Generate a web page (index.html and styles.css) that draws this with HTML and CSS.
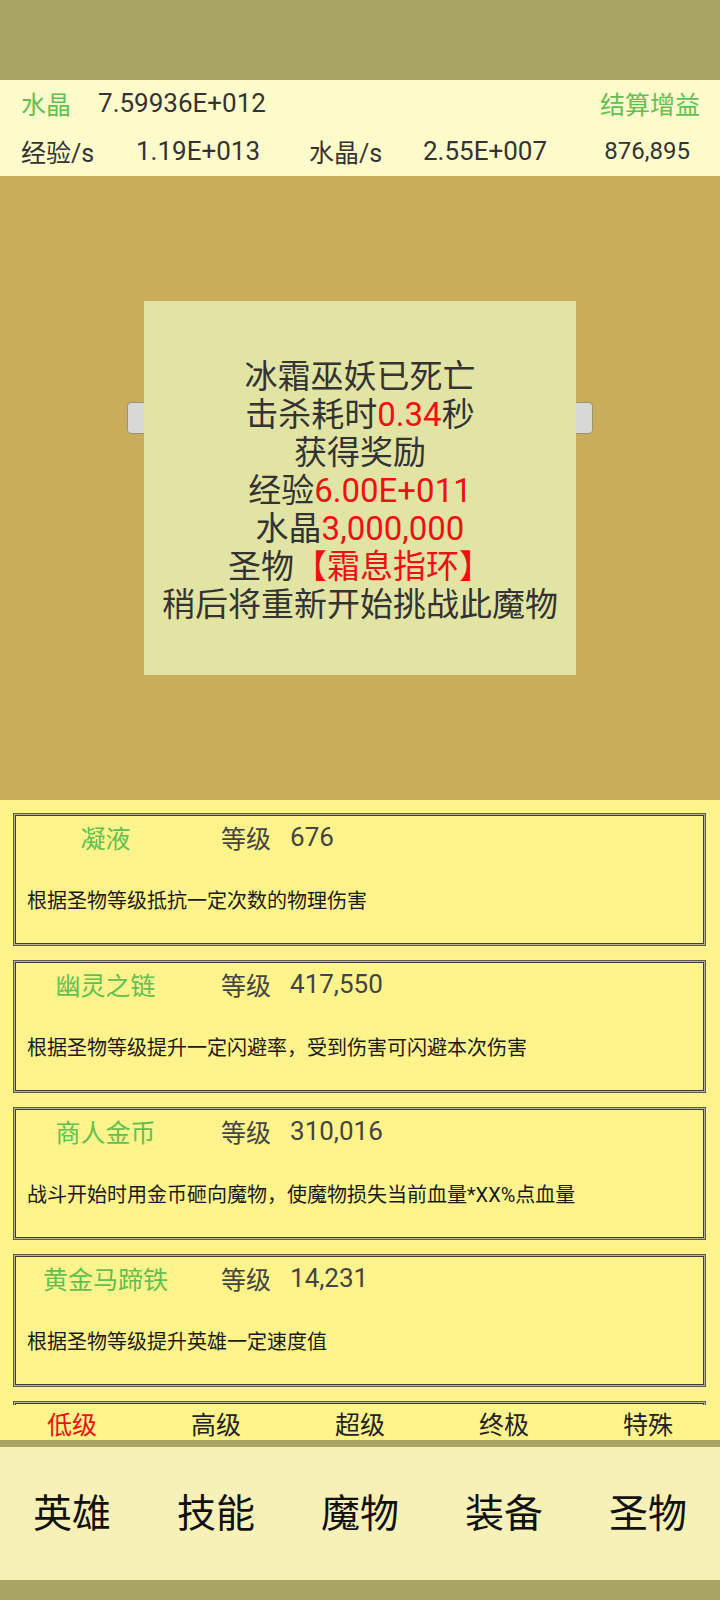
FILE: index.html
```html
<!DOCTYPE html>
<html lang="zh">
<head>
  <meta charset="UTF-8">
  <meta name="viewport" content="width=device-width, initial-scale=1.0">
  <title>圣物</title>
  <link rel="stylesheet" href="styles.css">
</head>
<body>
  <div class="screen">
    <div class="top-bar"></div>

    <div class="stats">
      <div class="stats-row">
        <span class="label green">水晶</span>
        <span class="value crystal-total">7.59936E+012</span>
        <span class="spacer"></span>
        <span class="label green settle">结算增益</span>
      </div>
      <div class="stats-row">
        <span class="label col-a">经验/s</span>
        <span class="value col-b">1.19E+013</span>
        <span class="label col-c">水晶/s</span>
        <span class="value col-d">2.55E+007</span>
        <span class="spacer"></span>
        <span class="value small">876,895</span>
      </div>
    </div>

    <div class="stage">
      <div class="stage-bar"></div>
      <div class="dialog">
        <p>冰霜巫妖已死亡</p>
        <p>击杀耗时<span class="red">0.34</span>秒</p>
        <p>获得奖励</p>
        <p>经验<span class="red">6.00E+011</span></p>
        <p>水晶<span class="red">3,000,000</span></p>
        <p>圣物<span class="red">【霜息指环】</span></p>
        <p>稍后将重新开始挑战此魔物</p>
      </div>
    </div>

    <div class="relic-list">
      <div class="relic">
        <div class="relic-head">
          <span class="relic-name">凝液</span>
          <span class="relic-level">等级</span>
          <span class="relic-num">676</span>
        </div>
        <div class="relic-desc">根据圣物等级抵抗一定次数的物理伤害</div>
      </div>
      <div class="relic">
        <div class="relic-head">
          <span class="relic-name">幽灵之链</span>
          <span class="relic-level">等级</span>
          <span class="relic-num">417,550</span>
        </div>
        <div class="relic-desc">根据圣物等级提升一定闪避率，受到伤害可闪避本次伤害</div>
      </div>
      <div class="relic">
        <div class="relic-head">
          <span class="relic-name">商人金币</span>
          <span class="relic-level">等级</span>
          <span class="relic-num">310,016</span>
        </div>
        <div class="relic-desc">战斗开始时用金币砸向魔物，使魔物损失当前血量*XX%点血量</div>
      </div>
      <div class="relic">
        <div class="relic-head">
          <span class="relic-name">黄金马蹄铁</span>
          <span class="relic-level">等级</span>
          <span class="relic-num">14,231</span>
        </div>
        <div class="relic-desc">根据圣物等级提升英雄一定速度值</div>
      </div>
      <!-- next card, scrolled under the tier tabs -->
      <div class="relic"></div>
    </div>

    <div class="tiers">
      <span class="tier active">低级</span>
      <span class="tier">高级</span>
      <span class="tier">超级</span>
      <span class="tier">终极</span>
      <span class="tier">特殊</span>
    </div>

    <div class="nav">
      <span class="nav-item">英雄</span>
      <span class="nav-item">技能</span>
      <span class="nav-item">魔物</span>
      <span class="nav-item">装备</span>
      <span class="nav-item">圣物</span>
    </div>
    <div class="bottom-bar"></div>
  </div>
</body>
</html>
```

FILE: styles.css
```css
body {
  margin: 0;
  padding: 0;
  font-family: "Roboto", "Noto Sans CJK SC", sans-serif;
  color: #333;
  background: #a9a463;
}
.screen {
  width: 720px;
  height: 1600px;
  display: flex;
  flex-direction: column;
  overflow: hidden;
}
.top-bar {
  height: 80px;
  background: #a9a463;
}
.stats {
  height: 96px;
  background: #fffbcb;
}
.stats-row {
  box-sizing: border-box;
  height: 48px;
  display: flex;
  align-items: center;
  padding: 0 20px 3px 21px;
  font-size: 25px;
}
.spacer {
  flex: 1;
}
.green {
  color: #62bf52;
}
.label {
  white-space: nowrap;
}
.value {
  font-size: 26px;
  white-space: nowrap;
}
.crystal-total {
  margin-left: 27px;
}
.col-a {
  width: 115px;
}
.col-b {
  width: 173px;
}
.col-c {
  width: 114px;
}
.small {
  font-size: 24px;
  margin-right: 10px;
}
.stage {
  height: 624px;
  background: #c9ad5b;
  display: grid;
  justify-items: center;
  align-items: center;
}
.stage-bar,
.dialog {
  grid-area: 1 / 1;
}
.stage-bar {
  align-self: start;
  margin-top: 226px;
  width: 464px;
  height: 30px;
  background: #d8d8d6;
  border: 1px solid #9c9470;
  border-radius: 4px;
}
.dialog {
  box-sizing: border-box;
  width: 432px;
  height: 374px;
  padding-top: 6px;
  background: #e2e4a4;
  display: flex;
  flex-direction: column;
  justify-content: center;
  align-items: center;
  font-size: 33px;
  line-height: 38px;
  color: #333;
}
.dialog p {
  margin: 0;
  white-space: nowrap;
}
.red {
  color: #ee1111;
}
.relic-list {
  height: 592px;
  background: #fff48b;
  padding: 13px 14px 0 13px;
  display: flex;
  flex-direction: column;
  gap: 14px;
  overflow: hidden;
}
.relic {
  flex: none;
  height: 127px;
  border: 1px solid #5e5b4c;
  box-shadow: inset 0 0 0 1px #b9b59c, inset 0 0 0 2px #3e3d36;
  padding: 2px;
}
.relic-head {
  height: 42px;
  display: flex;
  align-items: center;
  font-size: 25px;
  color: #444;
}
.relic-name {
  width: 179px;
  text-align: center;
  color: #62bf52;
}
.relic-level {
  margin-left: 26px;
}
.relic-num {
  margin-left: 19px;
  font-size: 26px;
}
.relic-desc {
  margin-top: 31px;
  padding-left: 11px;
  font-size: 20px;
  line-height: 24px;
  color: #1a1a1a;
}
.tiers {
  height: 30px;
  padding-bottom: 5px;
  background: #fff48b;
  display: grid;
  grid-template-columns: repeat(5, 1fr);
  align-items: center;
  justify-items: center;
  font-size: 25px;
  color: #222;
  border-bottom: 7px solid #a9a463;
}
.tier.active {
  color: #ee1111;
}
.nav {
  box-sizing: border-box;
  height: 133px;
  padding-bottom: 8px;
  background: #f7f1b8;
  display: grid;
  grid-template-columns: repeat(5, 1fr);
  align-items: center;
  justify-items: center;
  font-size: 39px;
  color: #111;
}
.bottom-bar {
  flex: 1;
  background: #a9a463;
}
```
